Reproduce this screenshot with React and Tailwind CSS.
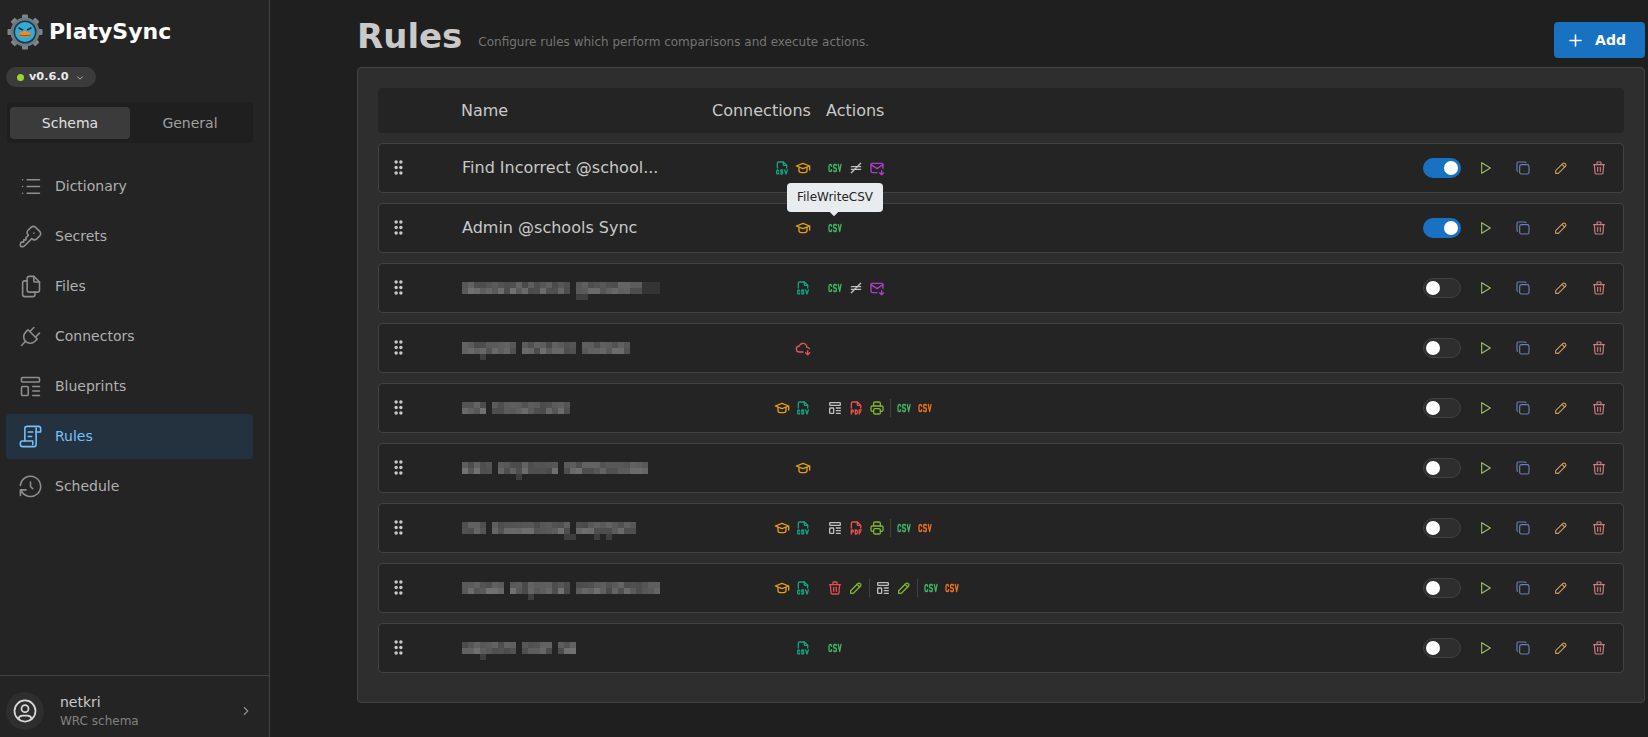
import React from "react";
import {
  TbList, TbKey, TbFiles, TbPlug, TbTemplate, TbHistory, TbCsv, TbFileTypeCsv, TbSchool, TbEqualNot,
  TbMailDown, TbCloudDown, TbFileTypePdf, TbPrinter, TbTrash, TbPencil, TbPlayerPlay, TbCopy, TbGripVertical,
  TbPlus, TbChevronRight, TbChevronDown, TbUserCircle,
} from "react-icons/tb";

function ScrollIcon({ className, strokeWidth = 1.5 }) {
  return (
    <svg viewBox="0 0 24 24" fill="none" stroke="currentColor" strokeWidth={strokeWidth} strokeLinecap="round" strokeLinejoin="round" className={className}>
      <path d="M7 16V5a2 2 0 0 1 2-2h10a2 2 0 0 1 2 2v3h-4" />
      <path d="M17 4.500V19a2 2 0 0 1-2 2H5a2 2 0 0 1-2-2v-1a2 2 0 0 1 2-2h9v3" />
      <path d="M10 8h4M10 12h3" />
    </svg>
  );
}

const nav = [
  ["Dictionary", TbList],
  ["Secrets", TbKey],
  ["Files", TbFiles],
  ["Connectors", TbPlug],
  ["Blueprints", TbTemplate],
  ["Rules", ScrollIcon, true],
  ["Schedule", TbHistory],
];

const CsvG = () => <TbCsv className="size-4 scale-y-125 text-[#40b560]" />;
const CsvO = () => <TbCsv className="size-4 scale-y-125 text-[#e8701a]" />;
const FileC = () => <TbFileTypeCsv className="size-4 text-[#14a37f]" />;
const Cap = () => <TbSchool className="size-4 text-[#e5a016]" />;
const Neq = () => <TbEqualNot className="size-4 text-[#c0c0c0]" />;
const Mail = () => <TbMailDown className="size-4 text-[#ae3ec9]" />;
const Bp = () => <TbTemplate className="size-4 text-[#c0c0c0]" />;
const Pdf = () => <TbFileTypePdf className="size-4 text-[#e8504f]" />;
const Print = () => <TbPrinter className="size-4 text-[#7fb52a]" />;
const Del = () => <TbTrash className="size-4 text-[#e05050]" />;
const Edit = () => <TbPencil className="size-4 text-[#7fb52a]" />;
const Cloud = () => <TbCloudDown className="size-4 text-[#e25555]" />;
const Sep = () => <div className="h-[18px] w-px bg-[#424242]" />;

const rows = [
  { name: "Find Incorrect @school...", on: true, conn: [FileC, Cap], act: [CsvG, Neq, Mail] },
  { name: "Admin @schools Sync", on: true, conn: [Cap], act: [CsvG] },
  { mosaic: [[0, 18, 0], [19, 11, 0], [30, 3, 1]], desc: [19, 20], conn: [FileC], act: [CsvG, Neq, Mail] },
  { mosaic: [[0, 9, 0], [10, 9, 0], [20, 8, 0]], desc: [3], conn: [Cloud], act: [] },
  { mosaic: [[0, 4, 0], [5, 13, 0]], desc: [], conn: [Cap, FileC], act: [Bp, Pdf, Print, Sep, CsvG, CsvO] },
  { mosaic: [[0, 5, 0], [6, 10, 0], [17, 14, 0]], desc: [9], conn: [Cap], act: [] },
  { mosaic: [[0, 4, 0], [5, 13, 0], [19, 10, 0]], desc: [17, 18, 22, 24], conn: [Cap, FileC], act: [Bp, Pdf, Print, Sep, CsvG, CsvO] },
  { mosaic: [[0, 7, 0], [8, 10, 0], [19, 14, 0]], desc: [11], conn: [Cap, FileC], act: [Del, Edit, Sep, Bp, Edit, Sep, CsvG, CsvO] },
  { mosaic: [[0, 9, 0], [10, 5, 0], [16, 3, 0]], desc: [3], conn: [FileC], act: [CsvG] },
];

function Mosaic({ segs, desc, seed }) {
  const rects = [];
  const shade = (x, y) => {
    const v = Math.sin((x + 1) * 12.9898 + (y + 1) * 78.233 + seed * 37.7) * 43758.5453;
    return v - Math.floor(v);
  };
  segs.forEach(([start, len, dim]) => {
    for (let x = start; x < start + len; x++) {
      for (let y = 0; y < 2; y++) {
        const g = dim ? 52 : Math.round(74 + shade(x, y) * (y ? 40 : 26));
        rects.push(<rect key={`${x}-${y}`} x={x * 6} y={y * 6} width="6" height="6" fill={`rgb(${g},${g},${g})`} />);
      }
    }
  });
  desc.forEach((x) => {
    rects.push(<rect key={`d${x}`} x={x * 6} y={12} width="6" height="6" fill="rgb(62,62,62)" />);
  });
  return (
    <svg width="210" height="18" className="mt-[6px] block" shapeRendering="crispEdges">
      {rects}
    </svg>
  );
}

function Logo() {
  const teeth = [0, 45, 90, 135, 180, 225, 270, 315];
  return (
    <svg viewBox="0 0 36 36" className="size-9 shrink-0">
      {teeth.map((a) => (
        <rect key={a} x="15" y="0.5" width="6" height="7" rx="1" fill="#7b858b" transform={`rotate(${a} 18 18)`} />
      ))}
      <circle cx="18" cy="18" r="14.5" fill="#6f7a80" />
      <circle cx="18" cy="18" r="11.5" fill="#1b3a4d" />
      <circle cx="18" cy="18" r="10" fill="#35abd4" />
      <path d="M12 14l3.500 1.800M24 14l-3.500 1.800" stroke="#12222c" strokeWidth="1.500" strokeLinecap="round" />
      <path d="M18 17c-2.500 0-6 1.800-6.500 4 1.800 1.300 4 1.800 6.500 1.800s4.700-.5 6.500-1.800c-.5-2.200-4-4-6.500-4z" fill="#f08a24" />
      <path d="M12.500 21c3 .8 8 .8 11 0" stroke="#7a3d10" strokeWidth="0.8" fill="none" />
    </svg>
  );
}

function Toggle({ on }) {
  return on ? (
    <div className="flex h-5 w-[38px] items-center justify-end rounded-full bg-[#1971c2] pr-[3px]">
      <div className="size-[14px] rounded-full bg-white" />
    </div>
  ) : (
    <div className="flex h-5 w-[38px] items-center rounded-full border border-[#424242] bg-[#2e2e2e] pl-[2px]">
      <div className="size-[14px] rounded-full bg-white" />
    </div>
  );
}

function Row({ r, i }) {
  return (
    <div className="flex h-[50px] items-center rounded-[4px] border border-[#424242] bg-[#242424]">
      <div className="mb-[1px] flex w-[38px] justify-center">
        <TbGripVertical className="size-[19px] text-[#c9c9c9]" strokeWidth={2.4} />
      </div>
      <div className="box-content w-[210px] min-w-0 pl-[45px]">
        {r.name ? (
          <div className="whitespace-nowrap text-[16px] text-[#c9c9c9]">{r.name}</div>
        ) : (
          <Mosaic segs={r.mosaic} desc={r.desc} seed={i} />
        )}
      </div>
      <div className="flex w-[141px] items-center justify-end gap-[5px] pr-[2px]">
        {r.conn.map((C, k) => <C key={k} />)}
      </div>
      <div className="ml-[14px] flex flex-1 items-center gap-[5px]">
        {r.act.map((C, k) => <C key={k} />)}
      </div>
      <div className="flex items-center pr-[16px]">
        <Toggle on={r.on} />
        <div className="ml-[16px] flex items-center gap-[22px]">
          <TbPlayerPlay className="size-4 text-[#9dbb60]" strokeWidth={1.7} />
          <TbCopy className="size-4 text-[#6a7fb5]" strokeWidth={1.7} />
          <TbPencil className="size-4 text-[#c99a5e]" strokeWidth={1.7} />
          <TbTrash className="size-4 text-[#c97f7f]" strokeWidth={1.7} />
        </div>
      </div>
    </div>
  );
}

export default function App() {
  return (
    <div className="flex h-[737px] w-[1648px] overflow-hidden bg-[#1f1f1f] font-['DejaVu_Sans',sans-serif]">
      <aside className="flex w-[270px] shrink-0 flex-col border-r border-[#424242] bg-[#242424]">
        <div className="flex items-center gap-[6px] pl-[7px] pt-[14px]">
          <Logo />
          <div className="text-[22px] font-bold leading-[36px] text-white">PlatySync</div>
        </div>
        <div className="mt-[17px] ml-[6px] flex h-5 w-[90px] items-center rounded-full bg-[#3b3b3b] pl-[11px] pt-[1px]">
          <div className="size-[7px] rounded-full bg-[#94d82d]" />
          <span className="ml-[5px] text-[11.300px] font-bold text-[#e9e9e9]">v0.6.0</span>
          <TbChevronDown className="ml-[6px] size-[10px] text-[#c9c9c9]" />
        </div>
        <div className="mt-[15px] ml-[7px] flex h-[41px] w-[246px] rounded-[4px] bg-[#1f1f1f] px-[3px] pb-[4px] pt-[5px]">
          <div className="flex flex-1 items-center justify-center rounded-[4px] bg-[#3b3b3b] text-[14px] text-[#e0e0e0]">Schema</div>
          <div className="flex flex-1 items-center justify-center text-[14px] text-[#a0a0a0]">General</div>
        </div>
        <nav className="mt-[21px] flex flex-col gap-[5px] pl-[6px] pr-[16px]">
          {nav.map(([label, Icon, active]) => (
            <div key={label} className={`flex h-[45px] items-center rounded-[4px] pl-[11px] ${active ? "bg-[#24323f] text-[#74c0fc]" : "text-[#b0b0b0]"}`}>
              <Icon className={`size-[27px] ${active ? "text-[#74c0fc]" : "text-[#8e8e8e]"}`} strokeWidth={1.4} />
              <span className="ml-[11px] text-[14px]">{label}</span>
            </div>
          ))}
        </nav>
        <div className="mt-auto flex h-[62px] items-center border-t border-[#424242] pl-[6px] pt-[9px]">
          <div className="flex size-[38px] items-center justify-center rounded-full bg-[#2e2e2e]">
            <TbUserCircle className="size-[28px] text-[#d8d8d8]" strokeWidth={1.5} />
          </div>
          <div className="ml-[16px] flex-1">
            <div className="text-[14px] leading-[20px] text-[#c9c9c9]">netkri</div>
            <div className="text-[12px] leading-[18px] text-[#828282]">WRC schema</div>
          </div>
          <TbChevronRight className="mr-[16px] size-[14px] text-[#8e8e8e]" />
        </div>
      </aside>
      <main className="relative flex min-w-0 flex-1 flex-col pl-[87px] pr-[3px]">
        <header className="flex h-[67px] items-center">
          <h1 className="mt-[6px] text-[34px] font-bold text-[#c9c9c9]">Rules</h1>
          <span className="ml-[16px] mt-[16px] text-[12px] text-[#757575]">Configure rules which perform comparisons and execute actions.</span>
          <button className="ml-auto mt-[13px] flex h-9 w-[91px] items-center justify-center gap-[10px] rounded-[4px] bg-[#1971c2] pr-[7px] text-[14px] font-bold text-white">
            <TbPlus className="size-[19px]" />
            Add
          </button>
        </header>
        <section className="flex h-[636px] flex-col gap-[10px] rounded-[4px] border border-[#424242] bg-[#2e2e2e] px-[20px] pt-[20px]">
          <div className="flex h-[45px] items-center rounded-[4px] bg-[#242424] text-[16px] text-[#c9c9c9]">
            <span className="ml-[83px] w-[251px]">Name</span>
            <span className="w-[115px] whitespace-nowrap">Connections</span>
            <span className="-ml-[1px]">Actions</span>
          </div>
          {rows.map((r, i) => <Row key={i} r={r} i={i} />)}
        </section>
        <div className="absolute left-[517px] top-[183px] rounded-[4px] bg-[#e9ecef] px-[10px] py-[6px] text-[12px] leading-[17px] text-[#242424]">
          FileWriteCSV
          <div className="absolute bottom-[-3px] left-[44px] size-[6px] rotate-45 bg-[#e9ecef]" />
        </div>
      </main>
    </div>
  );
}
